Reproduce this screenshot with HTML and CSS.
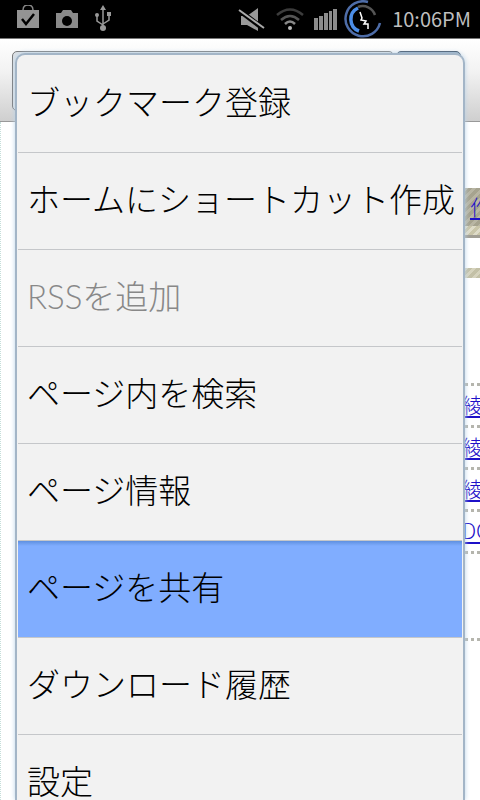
FILE: index.html
```
<!DOCTYPE html>
<html lang="ja">
<head>
	<title>ブラウザ メニュー</title>
	<meta charset="UTF-8">
	<meta name="viewport" content="width=device-width, initial-scale=1">
	<link rel="stylesheet" href="styles.css">
</head>

<body>

<header class="statusbar">
	<div class="notices">
		<svg width="24" height="28" viewBox="0 0 24 28">
			<path d="M7 6V5Q7 0 12 0T17 5V6" fill="none" stroke="#888" stroke-width="1.5"/>
			<path d="M1 5H23V23H1Z" fill="#939393"/>
			<path d="M6 14L10 19L18 9" fill="none" stroke="#000" stroke-width="2.5"/>
		</svg>
		<svg width="24" height="28" viewBox="0 0 24 28">
			<path d="M1 8H6L8 5H16L18 8H23V23H1Z" fill="#8a8a8a"/>
			<circle cx="12" cy="16" r="5" fill="#000"/>
		</svg>
		<svg width="18" height="28" viewBox="0 0 18 28">
			<path d="M9 4V24M9 20L3 16V10M9 19L15 15V9" fill="none" stroke="#999" stroke-width="1.5"/>
			<path d="M9 0L12 5H6Z" fill="#999"/>
			<circle cx="9" cy="23" r="3" fill="#999"/>
			<circle cx="3" cy="10" r="2" fill="#999"/>
			<path d="M13 7H17V11H13Z" fill="#999"/>
		</svg>
	</div>

	<div class="system">
		<svg width="28" height="28" viewBox="0 0 28 28">
			<path d="M3 11H9L20 3V26L9 20H3Z" fill="#999"/>
			<path d="M2 6L27 25" stroke="#000" stroke-width="5"/>
			<path d="M1 5L26 23" stroke="#aaa" stroke-width="2"/>
		</svg>
		<svg width="28" height="28" viewBox="0 0 28 28">
			<g fill="none" stroke-width="2.5">
				<path d="M1 10Q14 -1 27 10" stroke="#3c3c3c"/>
				<path d="M5 15Q14 7 23 15" stroke="#555"/>
				<path d="M9 19Q14 14 19 19" stroke="#888"/>
			</g>
			<circle cx="14" cy="23" r="2" fill="#bbb"/>
		</svg>
		<svg width="24" height="28" viewBox="0 0 24 28">
			<path d="M0 13H4V25H0ZM5 11H9V25H5ZM10 8H14V25H10ZM15 6H18V25H15ZM19 4H23V25H19Z" fill="#8c8c8c"/>
		</svg>
		<svg class="battery" width="38" height="38" viewBox="0 0 38 38">
			<g fill="none">
				<path d="M24 2A17.500 17.500 0 1 0 36 23" stroke="#4e6da8" stroke-width="2.500"/>
				<path d="M14 8A12.500 12.500 0 0 0 15 31" stroke="#4c8ee8" stroke-width="3.500"/>
				<path d="M14 7A13 13 0 0 1 31 15" stroke="#555" stroke-width="2.500"/>
				<path d="M16 12L18 18L17 20L22 21L20 24L24 24L24 29" stroke="#fff" stroke-width="1.500"/>
			</g>
		</svg>
		<time class="clock">10:06PM</time>
	</div>
</header>

<div class="browser">
	<div class="toolbar">
		<input class="address" type="text" aria-label="アドレス">
		<button class="go" type="button" aria-label="移動"></button>
	</div>

	<main class="page">
		<div class="side">
			<div class="side-head"><a href="#">作</a></div>
			<div class="side-strip"></div>
			<div class="side-bar"></div>
			<ul class="links">
				<li><a href="#">綾</a></li>
				<li><a href="#">綾</a></li>
				<li><a href="#">綾</a></li>
				<li><a href="#">DC</a></li>
				<li class="last"></li>
			</ul>
		</div>
	</main>

	<nav class="menu">
		<button type="button">ブックマーク登録</button>
		<button type="button">ホームにショートカット作成</button>
		<button type="button" disabled>RSSを追加</button>
		<button type="button">ページ内を検索</button>
		<button type="button">ページ情報</button>
		<button type="button" class="selected">ページを共有</button>
		<button type="button">ダウンロード履歴</button>
		<button type="button">設定</button>
	</nav>
</div>

</body>
</html>
```

FILE: styles.css
```
* {
	box-sizing: border-box;
}
body {
	margin: 0;
	height: 100vh;
	display: flex;
	flex-direction: column;
	overflow: hidden;
	background-color: white;
	font-family: "Noto Sans CJK JP", sans-serif;
	font-weight: 300;
}

/* status bar */
.statusbar {
	display: flex;
	flex: none;
	justify-content: space-between;
	height: 38px;
	padding: 0 9px 0 16px;
	background-color: black;
}
.notices {
	display: flex;
	align-items: center;
	gap: 15px;
}
.system {
	display: flex;
	align-items: center;
	gap: 10px;
}
.battery {
	margin-left: -4px;
}
.clock {
	color: #bebebe;
	font-weight: 400;
	font-size: 20px;
	line-height: 36px;
}

/* browser window */
.browser {
	position: relative;
	flex: 1;
	overflow: hidden;
}
.toolbar {
	display: flex;
	gap: 2px;
	height: 84px;
	padding: 12px 19px 10px 12px;
	border-top: 1px solid #777;
	border-bottom: 1px solid #999;
	background: linear-gradient(white, #f2f2f2 40%, #cfcfcf);
}
.address {
	flex: 1;
	min-width: 0;
	border: 1px solid #777;
	border-radius: 5px;
	background-color: #dde1e5;
}
.go {
	width: 65px;
	border: 1px solid #34465a;
	border-radius: 5px;
	background-color: #8fa6bb;
}
.page {
	display: flex;
	justify-content: flex-end;
	min-height: 100%;
	padding-top: 66px;
	border-left: 1px dotted #c5ded9;
}
.side {
	width: 20px;
	white-space: nowrap;
}
.side a {
	color: #1d10c8;
	text-underline-offset: 3px;
}
.side-head {
	height: 38px;
	padding-left: 10px;
	background: repeating-linear-gradient(135deg, #a6a38f 0 3px, #b8b5a3 3px 6px);
	font-size: 21px;
	line-height: 36px;
}
.side-strip {
	height: 12px;
	border-bottom: 3px solid #a19e94;
	background: repeating-linear-gradient(135deg, #c9c5a9 0 3px, #dedbc8 3px 6px);
}
.side-bar {
	height: 10px;
	margin-top: 30px;
	background: repeating-linear-gradient(135deg, #c3c0a6 0 3px, #d6d3bd 3px 6px);
}
.links {
	margin: 105px 0 0;
	padding: 0;
	border-top: 3px dotted #b5b5ad;
	list-style-type: none;
}
.links li {
	height: 42px;
	padding-left: 2px;
	border-bottom: 3px dotted #b5b5ad;
	font-size: 21px;
	line-height: 36px;
}
.links .last {
	height: 87px;
}

/* popup menu */
.menu {
	position: absolute;
	top: 15px;
	right: 15px;
	bottom: 0;
	left: 15px;
	overflow: hidden;
	border: 2px solid #a3b5c7;
	border-bottom: 0;
	border-radius: 10px 10px 0 0;
	padding: 1px 1px 0;
	background-color: #f2f2f2;
	box-shadow: 0 0 5px #b9d3e8;
}
.menu button {
	display: block;
	width: 100%;
	height: 97px;
	padding: 0 0 4px 9px;
	border: 0;
	border-bottom: 1px solid #c5c7ca;
	background-color: transparent;
	color: black;
	font-family: Lato, "Noto Sans CJK JP", sans-serif;
	font-size: 33px;
	font-weight: 300;
	line-height: 92px;
	text-align: left;
	white-space: nowrap;
}
.menu button:disabled {
	color: #888;
}
.menu .selected {
	background: linear-gradient(#5f90e0, #80adff 5px);
}
```
